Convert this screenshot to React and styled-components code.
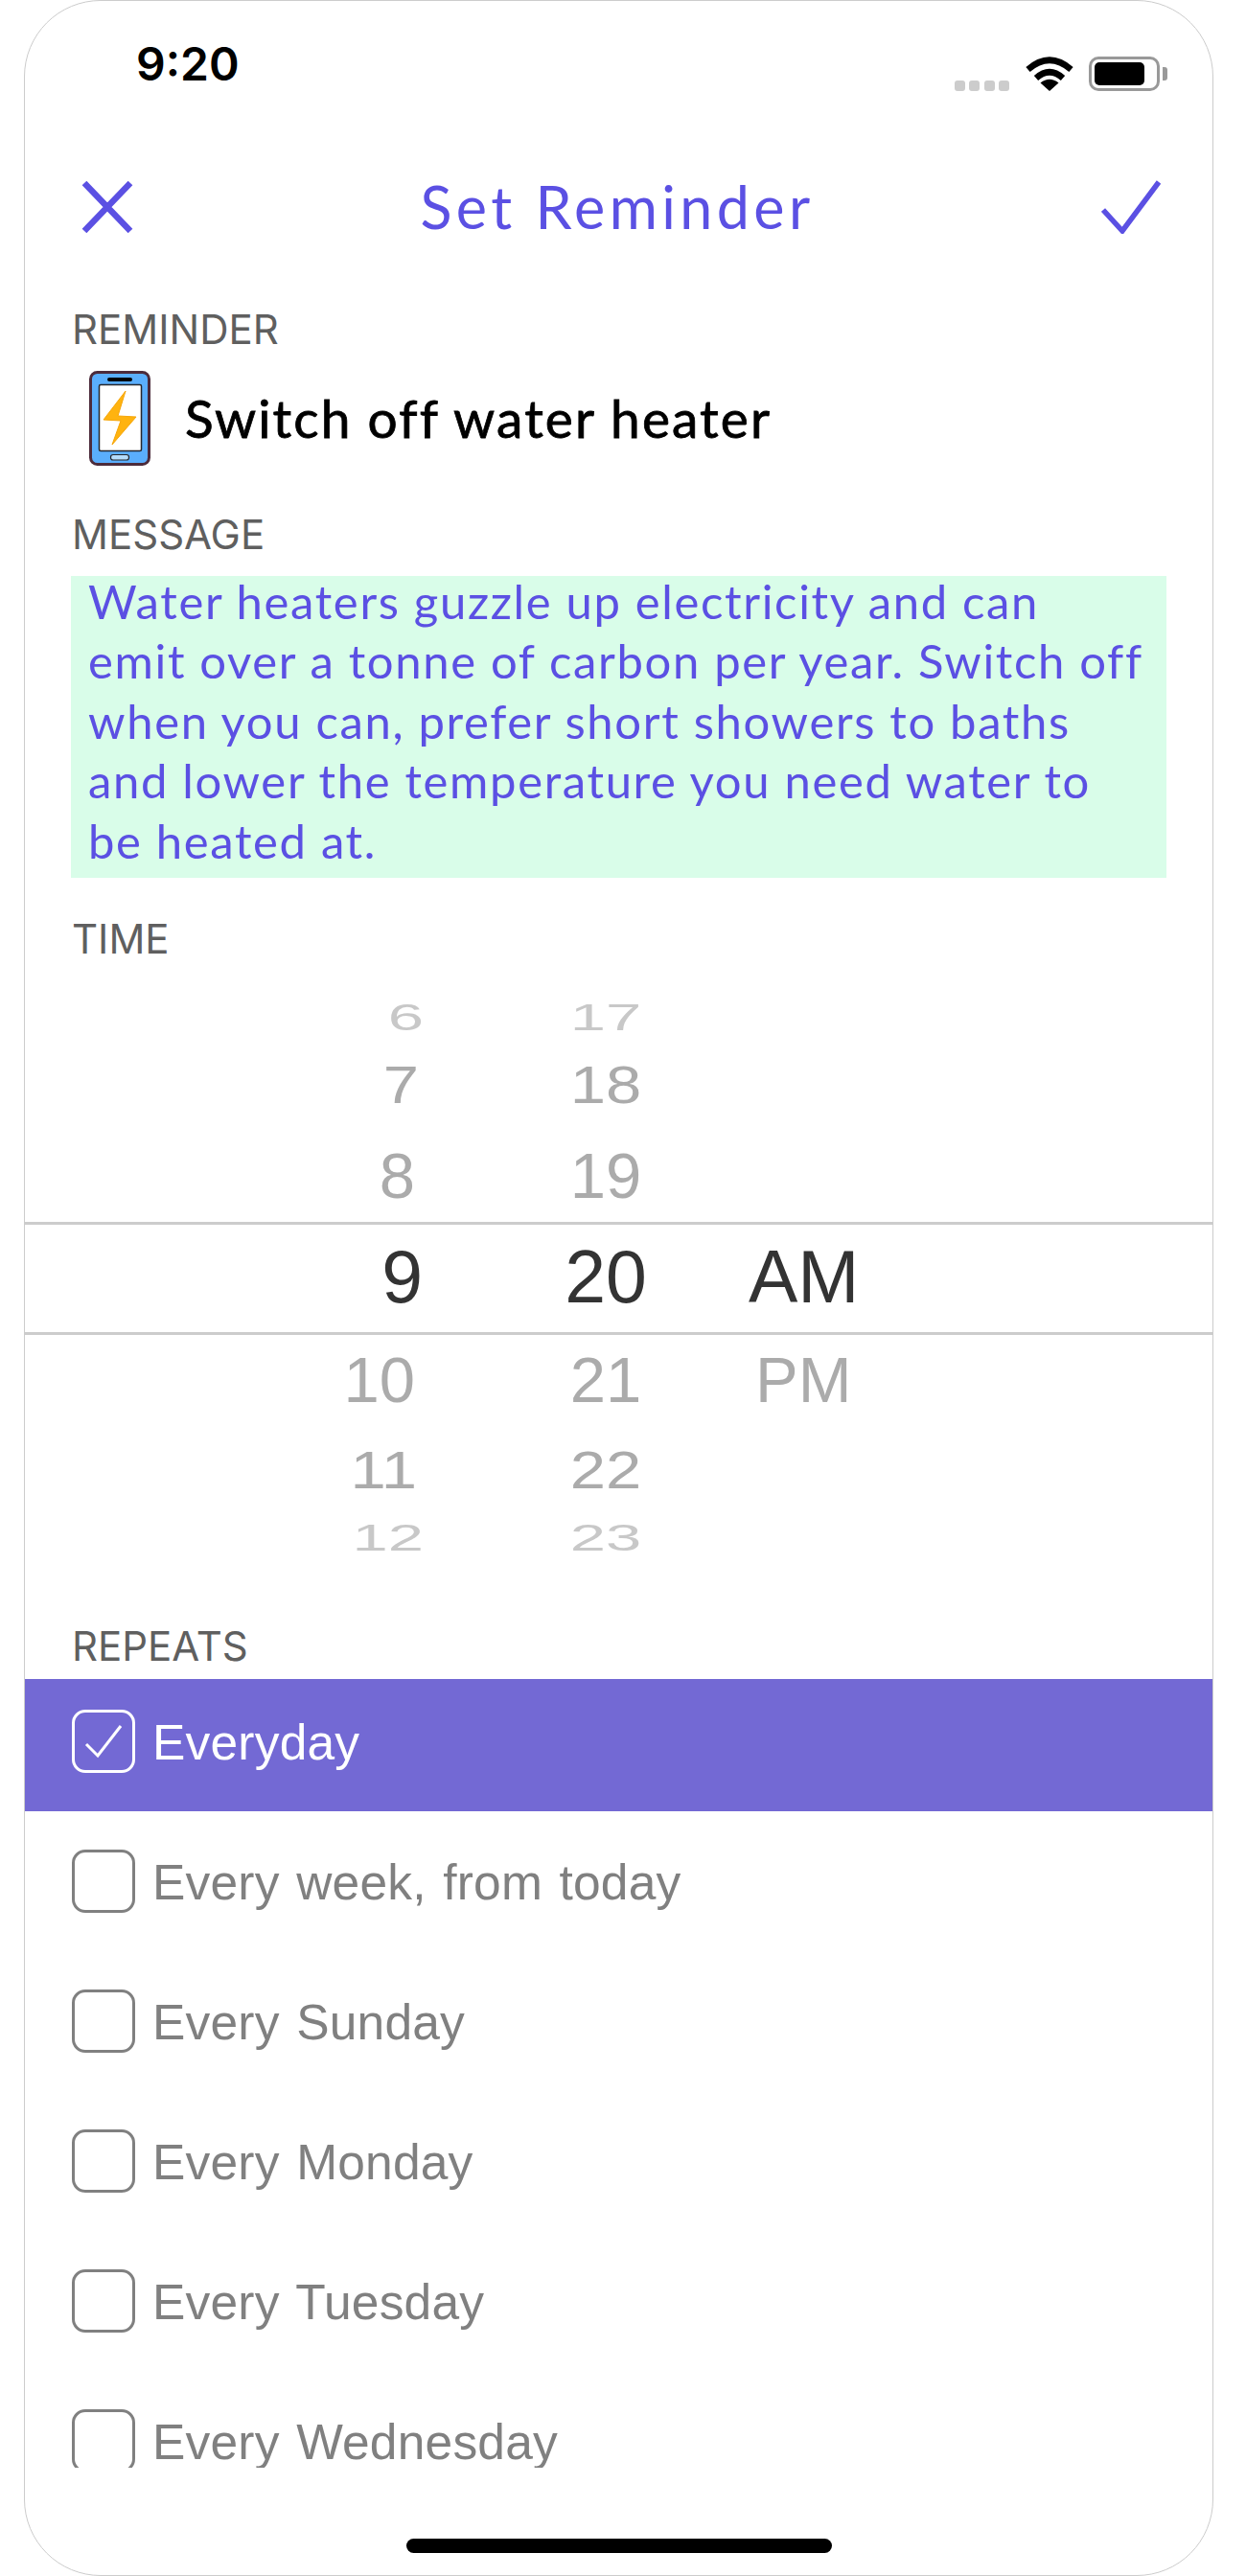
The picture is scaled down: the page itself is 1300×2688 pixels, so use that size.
import React from 'react';
import styled, { createGlobalStyle } from 'styled-components';

const GlobalStyle = createGlobalStyle`
  html, body {
    margin: 0;
    padding: 0;
    background: #ffffff;
  }
  * {
    box-sizing: border-box;
  }
`;

const ACCENT = '#5b50e3';

// Device frame

const Frame = styled.div`
  width: 1241px;
  height: 2688px;
  margin-left: 25px;
  background: #ffffff;
  border: 1.5px solid #cccccc;
  border-radius: 80px;
  overflow: hidden;
  display: flex;
  flex-direction: column;
`;

// Status bar

const StatusBar = styled.div`
  height: 120px;
  flex: none;
  display: flex;
  justify-content: space-between;
  padding: 38px 47px 0 116px;
`;

const Time = styled.div`
  font-family: 'Inter', sans-serif;
  font-weight: 600;
  font-size: 48px;
  line-height: 56px;
  color: #000000;
`;

const StatusIcons = styled.div`
  display: flex;
  align-items: flex-end;
  height: 56px;
  margin-top: 18px;
  padding-bottom: 18px;
`;

const SignalDots = styled.div`
  display: flex;
  gap: 4.5px;
  margin-right: 17px;
`;

const SignalDot = styled.span`
  width: 11px;
  height: 11px;
  border-radius: 3px;
  background: #cccccc;
`;

const BatteryBody = styled.div`
  width: 74px;
  height: 36px;
  margin-left: 16px;
  border: 3.5px solid #999999;
  border-radius: 10px;
  padding: 3px;
  background: #ffffff;
`;

const BatteryFill = styled.div`
  width: 52px;
  height: 100%;
  border-radius: 5px;
  background: #000000;
`;

const BatteryCap = styled.div`
  width: 5px;
  height: 14px;
  margin: 0 0 11px 3px;
  background: #999999;
  border-radius: 0 3px 3px 0;
`;

// Navigation bar

const NavBar = styled.div`
  height: 198px;
  flex: none;
  display: flex;
  align-items: center;
  justify-content: space-between;
  padding: 0 54px 9px 59px;
`;

const NavTitle = styled.div`
  font-family: 'Lato', sans-serif;
  font-size: 61px;
  letter-spacing: 4.4px;
  color: ${ACCENT};
`;

// Form sections

const SectionLabel = styled.div`
  height: 50px;
  flex: none;
  margin-left: 49px;
  font-family: 'Inter', sans-serif;
  font-size: 42px;
  line-height: 50px;
  color: #5f5f5f;
`;

const ReminderRow = styled.div`
  height: 164px;
  flex: none;
  display: flex;
  align-items: flex-start;
  padding: 18px 0 0 67px;
`;

const ReminderText = styled.div`
  margin: 14px 0 0 36px;
  font-family: 'Lato', sans-serif;
  font-size: 55px;
  line-height: 70px;
  letter-spacing: 2.1px;
  -webkit-text-stroke: 0.8px #000000;
  color: #000000;
`;

const MessageBox = styled.div`
  width: 1143px;
  height: 315px;
  flex: none;
  margin: 18px 0 39px 48px;
  padding: 0 18px;
  background: #d9fde9;
  color: ${ACCENT};
`;

const MessageText = styled.div`
  margin-top: -5px;
  font-family: 'Lato', sans-serif;
  font-size: 49px;
  line-height: 62.4px;
  letter-spacing: 1.65px;
`;

// Time picker

const Picker = styled.div`
  flex: none;
  margin-top: 26.5px;
  margin-bottom: 64px;
`;

const PickerRow = styled.div`
  height: ${(p) => p.$height}px;
  display: grid;
  grid-template-columns: 534px 144px 1fr;
  grid-template-rows: minmax(0, 1fr);
  align-items: center;
  padding-top: ${(p) => p.$top || 0}px;
  padding-bottom: ${(p) => (p.$selected ? 3 : 0)}px;
  border-top: ${(p) => (p.$selected ? '3px solid #cccccc' : 'none')};
  border-bottom: ${(p) => (p.$selected ? '3px solid #cccccc' : 'none')};
  font-family: 'Liberation Sans', sans-serif;
  font-size: ${(p) => (p.$selected ? 77 : 67)}px;
  line-height: 1;
  color: ${(p) => (p.$selected ? '#333333' : p.$faint ? '#c8c8c8' : '#ababab')};
`;

const Hour = styled.div`
  text-align: right;
  padding-right: ${(p) => p.$inset}px;
  transform: scaleY(${(p) => p.$squash});
`;

const Minute = styled.div`
  text-align: center;
  transform: scaleY(${(p) => p.$squash});
`;

const Period = styled.div`
  padding-left: ${(p) => p.$inset}px;
`;

// Repeat list

const RepeatList = styled.div`
  height: 823px;
  flex: none;
  overflow: hidden;
  margin-top: 9px;
  display: flex;
  flex-direction: column;
  gap: 8px;
`;

const RepeatRow = styled.div`
  height: 138px;
  flex: none;
  display: flex;
  align-items: flex-start;
  padding: 32px 0 0 49px;
  background: ${(p) => (p.$checked ? '#7369d4' : 'transparent')};
  color: ${(p) => (p.$checked ? '#ffffff' : '#808080')};
`;

const CheckBox = styled.div`
  width: 66px;
  height: 66px;
  flex: none;
  display: flex;
  align-items: center;
  justify-content: center;
  border: 3px solid currentColor;
  border-radius: 14px;
`;

const RepeatText = styled.div`
  margin: 4px 0 0 18px;
  font-family: 'Liberation Sans', sans-serif;
  font-size: 51.5px;
  line-height: 60px;
  letter-spacing: 0.2px;
  word-spacing: 3px;
`;

const HomeIndicator = styled.div`
  width: 444px;
  height: 15px;
  flex: none;
  margin: 74px auto 0;
  border-radius: 8px;
  background: #000000;
`;

// Drawings

const WifiIcon = () => (
  <svg width="50" height="36" viewBox="0 0 50 36">
    <path d="M2.5 13.5 Q25 -6 47.5 13.5" fill="none" stroke="#000" strokeWidth="6.5" />
    <path d="M11 22.5 Q25 10 39 22.5" fill="none" stroke="#000" strokeWidth="6.5" />
    <path d="M25 36 L15.5 27.5 Q25 20 34.5 27.5 Z" fill="#000" />
  </svg>
);

const CloseIcon = () => (
  <svg width="54" height="54" viewBox="0 0 54 54">
    <path d="M3 2 L51 52 M51 2 L3 52" fill="none" stroke={ACCENT} strokeWidth="6.5" />
  </svg>
);

const ConfirmIcon = () => (
  <svg width="62" height="56" viewBox="0 0 62 56">
    <path d="M2 31 L22 53 L60 2" fill="none" stroke={ACCENT} strokeWidth="5.5" />
  </svg>
);

const PhoneIcon = () => (
  <svg width="64" height="99" viewBox="0 0 64 99">
    <rect x="1.5" y="1.5" width="61" height="96" rx="7" fill="#5aaefc" stroke="#4c2b3b" strokeWidth="3" />
    <rect x="10.5" y="14.5" width="44" height="69" rx="1.5" fill="#ffffff" stroke="#25262b" strokeWidth="1.5" />
    <rect x="19" y="7" width="26" height="4" rx="2" fill="#000000" />
    <rect x="22.5" y="87.5" width="19" height="5.5" rx="2.5" fill="#b5dcfb" stroke="#25262b" strokeWidth="1.2" />
    <path d="M38 21 L15 51 L33 52 L24 77 L49 48 L30 47 Z" fill="#ffb30f" stroke="#f6a609" strokeWidth="1" strokeLinejoin="round" />
  </svg>
);

const TickIcon = () => (
  <svg width="40" height="36" viewBox="0 0 40 36">
    <path d="M2 21 L14 33 L38 2" fill="none" stroke="#ffffff" strokeWidth="3" />
  </svg>
);

// Data

const wheel = [
  { height: 60, hour: '6', minute: '17', inset: 118, squash: 0.57, faint: true },
  { height: 80, hour: '7', minute: '18', inset: 123, squash: 0.83 },
  { height: 103, top: 6, hour: '8', minute: '19', inset: 127, squash: 1 },
  { height: 118, hour: '9', minute: '20', inset: 119, squash: 1, period: 'AM', periodInset: 77, selected: true },
  { height: 93, hour: '10', minute: '21', inset: 127, squash: 1, period: 'PM', periodInset: 84 },
  { height: 95, hour: '11', minute: '22', inset: 125, squash: 0.83 },
  { height: 48, hour: '12', minute: '23', inset: 118, squash: 0.57, faint: true },
];

const repeats = [
  'Everyday',
  'Every week, from today',
  'Every Sunday',
  'Every Monday',
  'Every Tuesday',
  'Every Wednesday',
];

const App = () => {
  return (
    <>
      <GlobalStyle />
      <Frame>
        <StatusBar>
          <Time>9:20</Time>
          <StatusIcons>
            <SignalDots>
              <SignalDot />
              <SignalDot />
              <SignalDot />
              <SignalDot />
            </SignalDots>
            <WifiIcon />
            <BatteryBody>
              <BatteryFill />
            </BatteryBody>
            <BatteryCap />
          </StatusIcons>
        </StatusBar>

        <NavBar>
          <CloseIcon />
          <NavTitle>Set Reminder</NavTitle>
          <ConfirmIcon />
        </NavBar>

        <SectionLabel>REMINDER</SectionLabel>
        <ReminderRow>
          <PhoneIcon />
          <ReminderText>Switch off water heater</ReminderText>
        </ReminderRow>

        <SectionLabel>MESSAGE</SectionLabel>
        <MessageBox>
          <MessageText>
            Water heaters guzzle up electricity and can<br />
            emit over a tonne of carbon per year. Switch off<br />
            when you can, prefer short showers to baths<br />
            and lower the temperature you need water to<br />
            be heated at.
          </MessageText>
        </MessageBox>

        <SectionLabel>TIME</SectionLabel>
        <Picker>
          {wheel.map((row) => (
            <PickerRow key={row.hour} $height={row.height} $top={row.top} $selected={row.selected} $faint={row.faint}>
              <Hour $inset={row.inset} $squash={row.squash}>{row.hour}</Hour>
              <Minute $squash={row.squash}>{row.minute}</Minute>
              <Period $inset={row.periodInset}>{row.period}</Period>
            </PickerRow>
          ))}
        </Picker>

        <SectionLabel>REPEATS</SectionLabel>
        <RepeatList>
          {repeats.map((label, i) => (
            <RepeatRow key={label} $checked={i === 0}>
              <CheckBox>{i === 0 && <TickIcon />}</CheckBox>
              <RepeatText>{label}</RepeatText>
            </RepeatRow>
          ))}
        </RepeatList>

        <HomeIndicator />
      </Frame>
    </>
  );
};

export default App;
